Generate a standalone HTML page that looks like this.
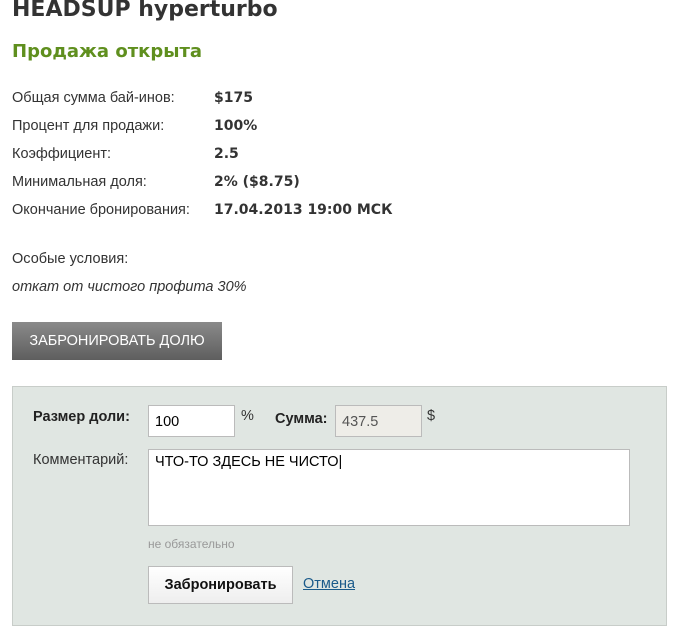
<!DOCTYPE html><html><head><meta charset="utf-8"><style>
body{margin:0;width:694px;height:611px;overflow:hidden;background:#fff;font-family:"DejaVu Sans","Liberation Sans",sans-serif;color:#333;position:relative}
.a{position:absolute;white-space:nowrap}
.l{font-family:"Liberation Sans",sans-serif;font-size:14.5px}
.v{font-weight:bold;font-size:14px}
.box{position:absolute;background:#fff;border:1px solid #bbb;box-sizing:border-box;font-family:"Liberation Sans",sans-serif;font-size:14.5px;color:#000;padding:8px 6px}
</style></head><body>
<div class="a" style="left:12px;top:-3px;font-size:22px;font-weight:bold;color:#333">HEADSUP hyperturbo</div>
<div class="a" style="left:12px;top:41px;font-size:18px;font-weight:bold;color:#5f8f1e">Продажа открыта</div>
<div class="a l" style="left:12px;top:90px">Общая сумма бай-инов:</div><div class="a v" style="left:214px;top:90px">$175</div>
<div class="a l" style="left:12px;top:118px">Процент для продажи:</div><div class="a v" style="left:214px;top:118px">100%</div>
<div class="a l" style="left:12px;top:146px">Коэффициент:</div><div class="a v" style="left:214px;top:146px">2.5</div>
<div class="a l" style="left:12px;top:174px">Минимальная доля:</div><div class="a v" style="left:214px;top:174px">2% ($8.75)</div>
<div class="a l" style="left:12px;top:202px">Окончание бронирования:</div><div class="a v" style="left:214px;top:202px">17.04.2013 19:00 МСК</div>
<div class="a l" style="left:12px;top:251px">Особые условия:</div>
<div class="a l" style="left:12px;top:279px;font-style:italic">откат от чистого профита 30%</div>
<div class="a" style="left:12px;top:322px;width:210px;height:38px;background:linear-gradient(#8a8a8a,#5e5e5e);color:#fff;font-family:'Liberation Sans',sans-serif;font-size:14.5px;line-height:38px;text-align:center">ЗАБРОНИРОВАТЬ ДОЛЮ</div>
<div class="a" style="left:12px;top:386px;width:655px;height:240px;background:#e0e6e2;border:1px solid #c8cdc9;box-sizing:border-box"></div>
<div class="a l" style="left:33px;top:409px;font-weight:bold;color:#222">Размер доли:</div>
<div class="box" style="left:148px;top:405px;width:87px;height:32px">100</div>
<div class="a l" style="left:241px;top:408px">%</div>
<div class="a l" style="left:275px;top:411px;font-weight:bold;color:#222">Сумма:</div>
<div class="box" style="left:335px;top:405px;width:87px;height:32px;background:#eeede8;color:#555">437.5</div>
<div class="a l" style="left:427px;top:408px">$</div>
<div class="a l" style="left:33px;top:452px">Комментарий:</div>
<div class="box" style="left:148px;top:449px;width:482px;height:77px;padding:4px 6px">ЧТО-ТО ЗДЕСЬ НЕ ЧИСТО|</div>
<div class="a" style="left:148px;top:537px;font-family:'Liberation Sans',sans-serif;font-size:12px;color:#999">не обязательно</div>
<div class="a" style="left:148px;top:566px;width:145px;height:38px;background:linear-gradient(#fff,#eee);border:1px solid #bbb;box-sizing:border-box;text-align:center;line-height:36px;font-family:'Liberation Sans',sans-serif;font-weight:bold;font-size:14.5px;color:#111">Забронировать</div>
<div class="a l" style="left:303px;top:576px;color:#1a5a8a;text-decoration:underline">Отмена</div>
</body></html>
